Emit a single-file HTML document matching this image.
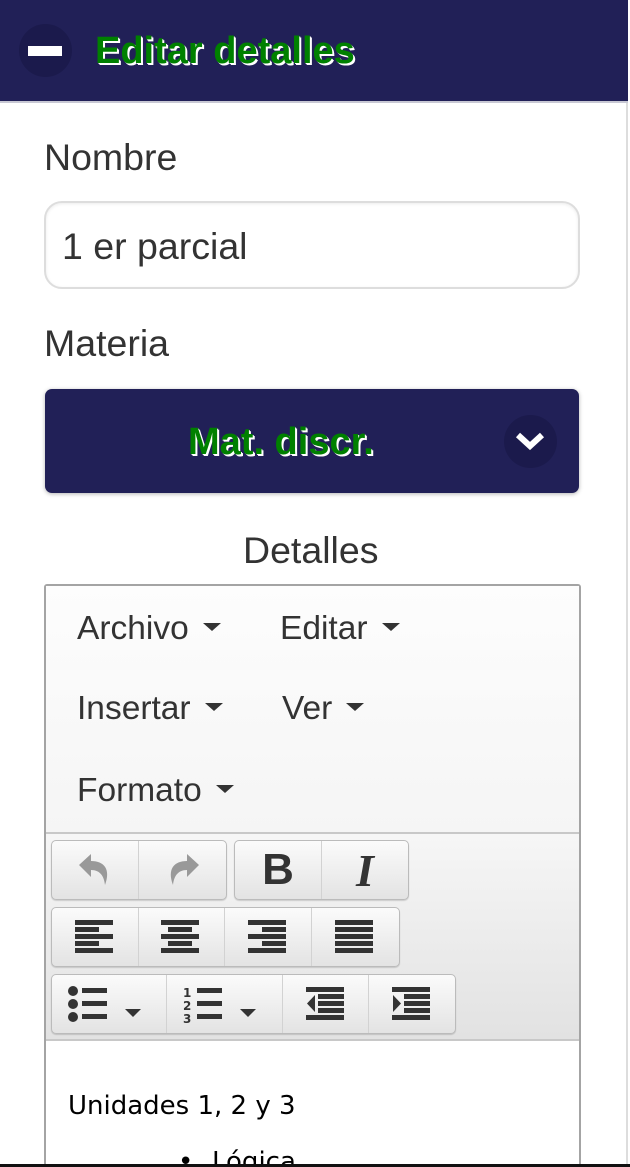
<!DOCTYPE html>
<html><head><meta charset="utf-8"><style>
*{margin:0;padding:0;box-sizing:border-box}
html,body{width:630px;height:1167px;overflow:hidden}
body{background:#fff;font-family:"Liberation Sans",sans-serif;color:#333;position:relative}
.a{position:absolute;white-space:nowrap}
.hdr{left:0;top:0;width:628px;height:103px;background:#212057;border-bottom:2px solid #c8c8d4}
.green{color:#008000;font-weight:bold;text-shadow:1px 1px 0 #fff,2px 2px 0 #fff}
.lbl{font-size:37.5px;line-height:40px}
.menu{font-size:33.5px;line-height:36px;color:#333}
.caret{display:inline-block;width:0;height:0;border-left:9px solid transparent;border-right:9px solid transparent;border-top:8px solid #333;vertical-align:middle;margin-left:14px;position:relative;top:-3px}
.grp{position:absolute;height:60px;border:1px solid #bbb;border-radius:5px;background:linear-gradient(#fbfbfb,#e3e3e3);display:flex;box-shadow:0 1px 1px rgba(0,0,0,.15)}
.grp div{height:100%;border-right:1px solid #d2d2d2;display:flex;align-items:center;justify-content:center}
.grp div:last-child{border-right:none}
</style></head><body>
<div class="a hdr"></div>
<div class="a" style="left:19px;top:24px;width:53px;height:53px;border-radius:50%;background:#1b1a4c"></div>
<div class="a" style="left:28px;top:46px;width:34px;height:10px;background:#fff"></div>
<div class="a green" style="left:95px;top:31px;font-size:38px;line-height:40px">Editar detalles</div>
<div class="a" style="left:626px;top:103px;width:2px;height:1064px;background:#ddd"></div>

<div class="a lbl" style="left:44px;top:137px">Nombre</div>
<div class="a" style="left:44px;top:201px;width:536px;height:88px;border:2px solid #ddd;border-radius:18px;box-shadow:inset 0 1px 3px rgba(0,0,0,.08)"></div>
<div class="a lbl" style="left:62px;top:226px">1 er parcial</div>

<div class="a lbl" style="left:44px;top:323px">Materia</div>
<div class="a" style="left:45px;top:389px;width:534px;height:104px;background:#212057;border-radius:7px;box-shadow:0 1px 4px rgba(0,0,0,.3)"></div>
<div class="a green" style="left:188px;top:422px;font-size:38px;line-height:40px">Mat. discr.</div>
<div class="a" style="left:504px;top:415px;width:53px;height:53px;border-radius:50%;background:#1b1a4c"></div>
<svg class="a" style="left:513px;top:428px" width="34" height="26" viewBox="0 0 34 26"><path d="M5 7 L17 18 L29 7" stroke="#fff" stroke-width="6" fill="none"/></svg>

<div class="a lbl" style="left:243px;top:530px">Detalles</div>

<div class="a" style="left:44px;top:584px;width:537px;height:600px;border:2px solid #a4a4a4;border-radius:3px;background:#fff"></div>
<div class="a" style="left:46px;top:586px;width:533px;height:246px;background:linear-gradient(#fdfdfd,#f5f5f5)"></div>
<div class="a menu" style="left:77px;top:611px">Archivo<span class="caret"></span></div>
<div class="a menu" style="left:280px;top:611px">Editar<span class="caret"></span></div>
<div class="a menu" style="left:77px;top:691px">Insertar<span class="caret"></span></div>
<div class="a menu" style="left:282px;top:691px">Ver<span class="caret"></span></div>
<div class="a menu" style="left:77px;top:773px">Formato<span class="caret"></span></div>
<div class="a" style="left:46px;top:832px;width:533px;height:209px;border-top:2px solid #c8c8c8;border-bottom:2px solid #c8c8c8;background:linear-gradient(#f6f6f6,#e2e2e2)"></div>

<div class="grp" style="left:51px;top:840px;width:176px">
<div style="width:88px"><svg width="36" height="36" viewBox="0 0 36 36"><path d="M2 13 L14 2 V9 C27 9 34 17 28 33 C27 24 23 18 14 18 V25 Z" fill="#999"/></svg></div>
<div style="width:88px"><svg width="36" height="36" viewBox="0 0 36 36"><path d="M34 13 L22 2 V9 C9 9 2 17 8 33 C9 24 13 18 22 18 V25 Z" fill="#999"/></svg></div></div>
<div class="grp" style="left:234px;top:840px;width:175px">
<div style="width:88px;font-weight:bold;font-size:44px;color:#333">B</div>
<div style="width:87px;font-family:'Liberation Serif',serif;font-style:italic;font-weight:bold;font-size:46px;color:#333">I</div></div>

<div class="grp" style="left:51px;top:907px;width:349px">
<div style="width:87px"><svg width="40" height="34" viewBox="0 0 40 34"><g fill="#333"><rect x="0" y="0" width="38" height="5"/><rect x="0" y="7" width="24" height="5"/><rect x="0" y="14" width="38" height="5"/><rect x="0" y="21" width="24" height="5"/><rect x="0" y="28" width="38" height="5"/></g></svg></div>
<div style="width:87px"><svg width="40" height="34" viewBox="0 0 40 34"><g fill="#333"><rect x="0" y="0" width="38" height="5"/><rect x="7" y="7" width="24" height="5"/><rect x="0" y="14" width="38" height="5"/><rect x="7" y="21" width="24" height="5"/><rect x="0" y="28" width="38" height="5"/></g></svg></div>
<div style="width:87px"><svg width="40" height="34" viewBox="0 0 40 34"><g fill="#333"><rect x="0" y="0" width="38" height="5"/><rect x="14" y="7" width="24" height="5"/><rect x="0" y="14" width="38" height="5"/><rect x="14" y="21" width="24" height="5"/><rect x="0" y="28" width="38" height="5"/></g></svg></div>
<div style="width:88px"><svg width="40" height="34" viewBox="0 0 40 34"><g fill="#333"><rect x="0" y="0" width="38" height="5"/><rect x="0" y="7" width="38" height="5"/><rect x="0" y="14" width="38" height="5"/><rect x="0" y="21" width="38" height="5"/><rect x="0" y="28" width="38" height="5"/></g></svg></div></div>

<div class="grp" style="left:51px;top:974px;width:405px">
<div style="width:116px"><svg width="84" height="40" viewBox="0 0 84 40"><g fill="#333"><circle cx="6" cy="7" r="5"/><circle cx="6" cy="20" r="5"/><circle cx="6" cy="33" r="5"/><rect x="15" y="4" width="25" height="5"/><rect x="15" y="17" width="25" height="5"/><rect x="15" y="30" width="25" height="5"/><path d="M58 25 H74 L66 33 Z"/></g></svg></div>
<div style="width:116px"><svg width="84" height="40" viewBox="0 0 84 40"><g fill="#333"><text x="0" y="13" font-size="12" font-weight="bold" font-family="DejaVu Sans">1</text><text x="0" y="26" font-size="12" font-weight="bold" font-family="DejaVu Sans">2</text><text x="0" y="39" font-size="12" font-weight="bold" font-family="DejaVu Sans">3</text><rect x="14" y="4" width="25" height="5"/><rect x="14" y="17" width="25" height="5"/><rect x="14" y="30" width="25" height="5"/><path d="M57 25 H73 L65 33 Z"/></g></svg></div>
<div style="width:87px"><svg width="40" height="34" viewBox="0 0 40 34"><g fill="#333"><rect x="0" y="0" width="38" height="5"/><rect x="12" y="7" width="26" height="5"/><rect x="12" y="14" width="26" height="5"/><rect x="12" y="21" width="26" height="5"/><rect x="0" y="28" width="38" height="5"/><path d="M9 8 V25 L1 16.5Z"/></g></svg></div>
<div style="width:86px"><svg width="40" height="34" viewBox="0 0 40 34"><g fill="#333"><rect x="0" y="0" width="38" height="5"/><rect x="12" y="7" width="26" height="5"/><rect x="12" y="14" width="26" height="5"/><rect x="12" y="21" width="26" height="5"/><rect x="0" y="28" width="38" height="5"/><path d="M1 8 V25 L9 16.5Z"/></g></svg></div></div>

<div class="a" style="left:68px;top:1090px;font-family:'DejaVu Sans',sans-serif;font-size:26px;line-height:32px;color:#000">Unidades 1, 2 y 3</div>
<div class="a" style="left:178px;top:1146px;font-family:'DejaVu Sans',sans-serif;font-size:26px;line-height:32px;color:#000">•</div>
<div class="a" style="left:212px;top:1146px;font-family:'DejaVu Sans',sans-serif;font-size:26px;line-height:32px;color:#000">Lógica</div>
<div class="a" style="left:0;top:1164px;width:630px;height:3px;background:#111"></div>
</body></html>
